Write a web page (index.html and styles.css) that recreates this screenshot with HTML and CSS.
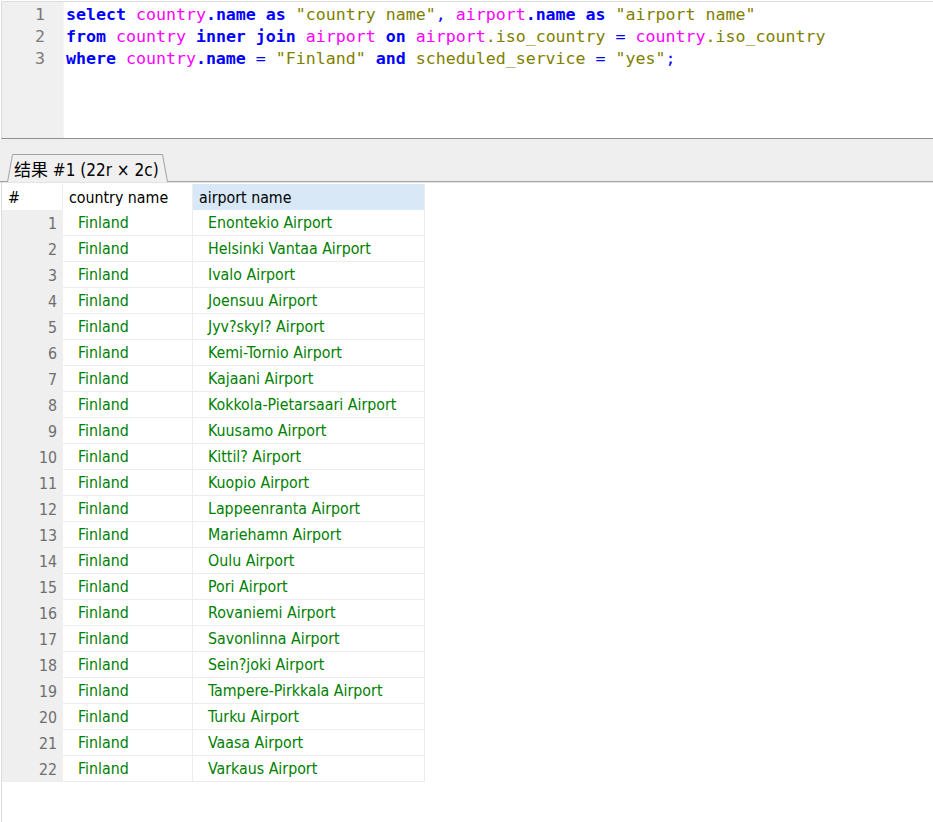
FILE: index.html
```html
<!DOCTYPE html>
<html lang="zh">
<head>
<meta charset="utf-8">
<title>Query</title>
<link rel="stylesheet" href="styles.css">
</head>
<body>
<div class="app">
  <div class="editor">
    <div class="gutter">
      <div class="ln">1</div>
      <div class="ln">2</div>
      <div class="ln">3</div>
    </div>
    <div class="code">
      <div class="line"><span class="kw">select</span> <span class="tb">country</span><span class="kw">.name</span> <span class="kw">as</span> <span class="str">"country name"</span><span class="op">,</span> <span class="tb">airport</span><span class="kw">.name</span> <span class="kw">as</span> <span class="str">"airport name"</span></div>
      <div class="line"><span class="kw">from</span> <span class="tb">country</span> <span class="kw">inner</span> <span class="kw">join</span> <span class="tb">airport</span> <span class="kw">on</span> <span class="tb">airport</span><span class="fd">.iso_country</span> <span class="op">=</span> <span class="tb">country</span><span class="fd">.iso_country</span></div>
      <div class="line"><span class="kw">where</span> <span class="tb">country</span><span class="kw">.name</span> <span class="op">=</span> <span class="str">"Finland"</span> <span class="kw">and</span> <span class="fd">scheduled_service</span> <span class="op">=</span> <span class="str">"yes"</span><span class="op">;</span></div>
    </div>
  </div>
  <div class="tabbar">
    <div class="tab">
      <svg class="tab-shape" width="161" height="28" viewBox="0 0 161 28" aria-hidden="true">
        <polygon points="0.5,28 5.5,0.5 155.5,0.5 160.5,28" fill="#f0f0f0"/>
        <polyline points="0.5,28 5.5,0.5 155.5,0.5 160.5,28" fill="none" stroke="#a3a3a3" stroke-width="1"/>
      </svg>
      <span class="tab-label">结果 #1 (22r × 2c)</span>
    </div>
  </div>
  <div class="results">
    <div class="grid">
      <div class="hc hnum">#</div>
      <div class="hc">country name</div>
      <div class="hc hsel">airport name</div>

      <div class="rn">1</div><div class="c">Finland</div><div class="c">Enontekio Airport</div>
      <div class="rn">2</div><div class="c">Finland</div><div class="c">Helsinki Vantaa Airport</div>
      <div class="rn">3</div><div class="c">Finland</div><div class="c">Ivalo Airport</div>
      <div class="rn">4</div><div class="c">Finland</div><div class="c">Joensuu Airport</div>
      <div class="rn">5</div><div class="c">Finland</div><div class="c">Jyv?skyl? Airport</div>
      <div class="rn">6</div><div class="c">Finland</div><div class="c">Kemi-Tornio Airport</div>
      <div class="rn">7</div><div class="c">Finland</div><div class="c">Kajaani Airport</div>
      <div class="rn">8</div><div class="c">Finland</div><div class="c">Kokkola-Pietarsaari Airport</div>
      <div class="rn">9</div><div class="c">Finland</div><div class="c">Kuusamo Airport</div>
      <div class="rn">10</div><div class="c">Finland</div><div class="c">Kittil? Airport</div>
      <div class="rn">11</div><div class="c">Finland</div><div class="c">Kuopio Airport</div>
      <div class="rn">12</div><div class="c">Finland</div><div class="c">Lappeenranta Airport</div>
      <div class="rn">13</div><div class="c">Finland</div><div class="c">Mariehamn Airport</div>
      <div class="rn">14</div><div class="c">Finland</div><div class="c">Oulu Airport</div>
      <div class="rn">15</div><div class="c">Finland</div><div class="c">Pori Airport</div>
      <div class="rn">16</div><div class="c">Finland</div><div class="c">Rovaniemi Airport</div>
      <div class="rn">17</div><div class="c">Finland</div><div class="c">Savonlinna Airport</div>
      <div class="rn">18</div><div class="c">Finland</div><div class="c">Sein?joki Airport</div>
      <div class="rn">19</div><div class="c">Finland</div><div class="c">Tampere-Pirkkala Airport</div>
      <div class="rn">20</div><div class="c">Finland</div><div class="c">Turku Airport</div>
      <div class="rn">21</div><div class="c">Finland</div><div class="c">Vaasa Airport</div>
      <div class="rn">22</div><div class="c">Finland</div><div class="c">Varkaus Airport</div>
    </div>
  </div>
</div>
</body>
</html>
```
FILE: styles.css
```css
html, body {
  margin: 0;
  padding: 0;
  background: #ffffff;
}
body {
  font-family: "DejaVu Sans Condensed", "DejaVu Sans", "Noto Sans CJK SC", sans-serif;
  font-size: 15.8px;
  color: #000;
}
.app {
  display: flex;
  flex-direction: column;
  min-height: 822px;
  box-sizing: border-box;
  padding-top: 1px;
}

/* SQL editor */
.editor {
  display: flex;
  height: 138px;
  box-sizing: border-box;
  margin-left: 1px;
  border-top: 1px solid #dcdcdc;
  border-left: 1px solid #dcdcdc;
  border-bottom: 1px solid #8f8f8f;
  font-family: "DejaVu Sans Mono", "Liberation Mono", monospace;
  font-size: 16.6px;
}
.gutter {
  width: 61px;
  flex: none;
  background: #f0f0f0;
  padding-top: 2px;
  box-sizing: border-box;
  padding-right: 18px;
  text-align: right;
  color: #7a7a7a;
}
.ln, .line {
  height: 22px;
  line-height: 22px;
  white-space: pre;
}
.code {
  flex: 1;
  padding-top: 2px;
  padding-left: 2px;
  border-left: 1px solid #f4f4f4;
}
.kw { color: #0000ff; font-weight: bold; }
.tb { color: #ff00ff; }
.str { color: #808000; }
.fd { color: #808000; }
.op { color: #0000ff; }

/* result tab bar */
.tabbar {
  height: 43px;
  box-sizing: border-box;
  background: #efefef;
  border-bottom: 1px solid #a3a3a3;
  box-shadow: 0 1px 0 #e4e4e4;
  display: flex;
  align-items: flex-end;
  padding-left: 7px;
}
.tab {
  position: relative;
  width: 161px;
  height: 28px;
  margin-bottom: -1px;
  display: flex;
  align-items: center;
  box-sizing: border-box;
  padding-left: 7px;
  padding-top: 1px;
}
.tab-shape {
  position: absolute;
  left: 0;
  top: 0;
}
.tab-label {
  position: relative;
  white-space: nowrap;
  font-family: "DejaVu Sans Condensed", "Noto Sans CJK SC", sans-serif;
  font-size: 17px;
  color: #000;
}

/* results grid */
.results {
  flex: 1;
  margin-left: 1px;
  border-left: 1px solid #dcdcdc;
  padding-top: 2px;
}
.grid {
  display: grid;
  grid-template-columns: 61px 130px 232px;
  grid-auto-rows: 26px;
  width: max-content;
}
.hc {
  box-sizing: border-box;
  height: 26px;
  line-height: 25px;
  padding-left: 6px;
  padding-top: 1px;
  border-right: 1px solid #ececec;
  white-space: nowrap;
}
.hnum {
  padding-left: 6px;
}
.hsel {
  background: #d8e8f7;
}
.rn {
  background: #efefef;
  text-align: right;
  padding-right: 6px;
  padding-top: 1px;
  line-height: 25px;
  color: #6e6e6e;
}
.c {
  box-sizing: border-box;
  border-right: 1px solid #ececec;
  border-bottom: 1px solid #ececec;
  line-height: 24px;
  padding-top: 1px;
  padding-left: 15px;
  color: #008000;
  white-space: nowrap;
}
```
